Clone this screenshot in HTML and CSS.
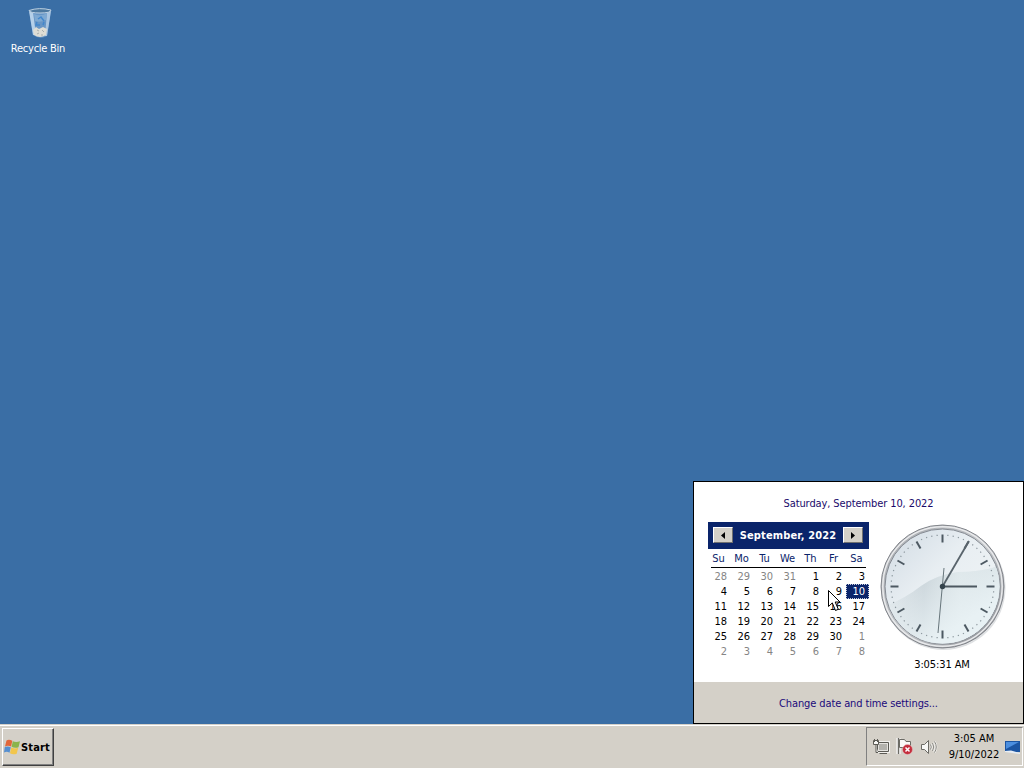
FILE: index.html
```html
<!DOCTYPE html>
<html lang="en">
<head>
  <meta charset="UTF-8">
  <title>Desktop</title>
  <link rel="stylesheet" href="styles.css">
</head>
<body>

<main class="desktop">
  <div class="desktop-icon">
    <svg class="bin" width="28" height="34" viewBox="0 0 28 34">
      <path d="M3 4 L25 4 L21 30 Q14 34 7 29Z" fill="#6795c5"/>
      <path d="M3 5 L7 6 L10 29 L7 29Z" fill="#b5d0e9"/>
      <path d="M21 6 L25 5 L21 30 L19 30Z" fill="#a9c5e1"/>
      <path d="M8 8 Q15 11 21 7 L20 14 Q14 17 9 15Z" fill="#7ea9d2"/>
      <path d="M12 13 l3 -2 l3 4 M11 16 l-1 3 l4 0 M18 16 l-1 3" stroke="#4287cc" stroke-width="1.500" fill="none"/>
      <path d="M7 24 L10 21 L13 23 L17 21 L21 23 L20 29 Q14 33 8 29Z" fill="#deddd5"/>
      <path d="M11 24 l2 1 M16 24 l2 2 M11 28 l2 -1 M15 29 l2 0" stroke="#a9aeac" fill="none"/>
      <path d="M3 4.500 Q13 1 25 4 Q25 7 14 7 Q4 7 3 4.500Z" fill="#4c789f" stroke="#bdd0e1"/>
    </svg>
    <span>Recycle Bin</span>
  </div>

  <section class="flyout">
    <div class="flyout-date">Saturday, September 10, 2022</div>
    <div class="flyout-body">
      <div class="calendar">
        <div class="cal-header">
          <button class="cal-nav"><svg width="4" height="7" viewBox="0 0 4 7"><path d="M4 0V7L0 3.5Z"/></svg></button>
          <span>September, 2022</span>
          <button class="cal-nav"><svg width="4" height="7" viewBox="0 0 4 7"><path d="M0 0V7L4 3.5Z"/></svg></button>
        </div>
        <div class="weekdays">
          <span>Su</span><span>Mo</span><span>Tu</span><span>We</span><span>Th</span><span>Fr</span><span>Sa</span>
        </div>
        <div class="days" id="days"></div>
      </div>
      <div class="clock">
        <svg width="128" height="128" viewBox="0 0 128 128">
          <defs>
            <linearGradient id="rim" x1="0" y1="0" x2="1" y2="1">
              <stop offset="0" stop-color="#a4a7ac"/>
              <stop offset=".5" stop-color="#c4c7ca"/>
              <stop offset="1" stop-color="#85888e"/>
            </linearGradient>
            <linearGradient id="face" x1="0" y1="0" x2="1" y2="1">
              <stop offset="0" stop-color="#d0dae3"/>
              <stop offset=".4" stop-color="#e8eef2"/>
              <stop offset=".7" stop-color="#edf2f4"/>
              <stop offset="1" stop-color="#e4edf0"/>
            </linearGradient>
            <linearGradient id="wave" x1="0" y1=".5" x2="1" y2=".5">
              <stop offset="0" stop-color="#c6d1d6" stop-opacity="0"/>
              <stop offset=".35" stop-color="#c9d3d9"/>
              <stop offset=".65" stop-color="#dce5e8"/>
              <stop offset="1" stop-color="#d0dade"/>
            </linearGradient>
            <linearGradient id="fade" x1="0" y1="0" x2="1" y2="1">
              <stop offset=".2" stop-color="#e5eef1" stop-opacity="0"/>
              <stop offset=".7" stop-color="#e8f1f4"/>
            </linearGradient>
            <clipPath id="dial"><circle cx="64.500" cy="64.500" r="57"/></clipPath>
          </defs>
          <circle cx="65.500" cy="66" r="62" fill="#dfe1e3"/>
          <circle cx="64.500" cy="64.500" r="61.500" fill="url(#rim)" stroke="#82858b"/>
          <circle cx="64.500" cy="64.500" r="59.700" fill="none" stroke="#e9eaec" stroke-width="1.500"/>
          <circle cx="64.500" cy="64.500" r="57.500" fill="url(#face)" stroke="#858a92"/>
          <g clip-path="url(#dial)">
            <path d="M4 86 Q28 76 43 64 Q58 53 80 50 Q104 50 124 43V124H4Z" fill="url(#wave)"/>
            <path d="M4 86 Q28 76 43 64 Q58 53 80 50 Q104 50 124 43V124H4Z" fill="url(#fade)"/>
          </g>
          <g id="ticks"></g>
          <path d="M64.500 64.500L91 19" stroke="#59646c" stroke-width="1.800"/>
          <path d="M64 64.500H99" stroke="#4d5860" stroke-width="2"/>
          <path d="M66 46L60 111" stroke="#67757b"/>
          <circle cx="64.500" cy="64.500" r="2.700" fill="#34434c"/>
        </svg>
        <div class="clock-time">3:05:31 AM</div>
      </div>
    </div>
    <div class="flyout-footer"><a>Change date and time settings...</a></div>
  </section>

  <svg class="cursor" width="14" height="22" viewBox="0 0 14 22">
    <path d="M.5 .5V16.500L4.300 12.900L7.500 20.500L10.300 19.300L7.200 12H12Z" fill="#fff" stroke="#000"/>
  </svg>
</main>

<footer class="taskbar">
  <button class="start">
    <svg width="16" height="16" viewBox="0 0 16 16">
      <path d="M2.500 1.500Q5 0 8.300 1.800L7.100 7.500Q4 6 1 7.400Z" fill="#e2673a"/>
      <path d="M8.800 2.200Q12 3.800 16 2.200L14.500 8.200Q11 9.400 7.600 7.800Z" fill="#8bb44c"/>
      <path d="M.8 8.100Q3.700 6.800 6.800 8.300L5.500 13.700Q3 12.200 0 13.400Z" fill="#568fd0"/>
      <path d="M7.300 8.600Q10.500 10.100 14.200 8.800L12.700 14.700Q9 16 6 14.200Z" fill="#f2c64c"/>
    </svg>
    <span>Start</span>
  </button>
  <div class="tray">
    <svg class="tray-icon" width="18" height="16" viewBox="0 0 18 16">
      <path d="M5.500 3.500H16.500V12.500H5.500Z" fill="#c8c6c0" stroke="#f1f0ed" stroke-width="3"/>
      <path d="M5.500 3.500H16.500V12.500H5.500ZM7.500 14.500H15" fill="#e4e3df" stroke="#5c5b55"/>
      <path d="M7 5H15V11H7Z" fill="#b3b2ad"/>
      <path d="M1.500 1.500H6.500V5.500H1.500ZM2.500 0V3M5.500 0V3M4 6V13.500H6" fill="#f7f7f5" stroke="#5c5b55"/>
    </svg>
    <svg class="tray-icon" width="18" height="17" viewBox="0 0 18 17">
      <path d="M2.500 0V16" stroke="#fff" stroke-width="4"/>
      <path d="M2.500 0V16" stroke="#6c6b65" stroke-width="1.500"/>
      <path d="M3.500 1.500H8.500L10 3.500H14.500V10.500H9L7.500 9.500H3.500Z" fill="#fafaf8" stroke="#6c6b65"/>
      <circle cx="11.500" cy="11.500" r="5" fill="#c42d3c" stroke="#e8c2c3" stroke-width=".5"/>
      <path d="M9.500 9.500L13.500 13.500M13.500 9.500L9.500 13.500" stroke="#fff" stroke-width="1.500"/>
    </svg>
    <svg class="tray-icon" width="18" height="16" viewBox="0 0 18 16">
      <path d="M1.500 5.500H4.500L8.500 1.500V14.500L4.500 10.500H1.500Z" fill="#f7f7f5" stroke="#6c6b65"/>
      <path d="M10.500 5.500Q12 8 10.500 10.500M12.500 4Q15 8 12.500 12M14.500 2.500Q18 8 14.500 13.500" fill="none" stroke="#f4f3f0" stroke-width="2.200"/>
      <path d="M10.500 5.500Q12 8 10.500 10.500M12.500 4Q15 8 12.500 12M14.500 2.500Q18 8 14.500 13.500" fill="none" stroke="#85847e"/>
    </svg>
    <div class="tray-clock"><span class="tray-time">3:05 AM</span><span class="tray-date">9/10/2022</span></div>
    <svg class="show-desktop" width="15" height="14" viewBox="0 0 15 14">
      <path d="M0 1H15V12H0Z" fill="#1c55a2"/>
      <path d="M1 2H14L1 9Z" fill="#4c8fdf"/>
      <path d="M0 11L6 10.500L15 13V14L7 13L0 12Z" fill="#e6edf5"/>
    </svg>
  </div>
</footer>

<script>
  // six weeks, starting on Sunday August 28
  const start = new Date(2022, 7, 28);
  let days = "";
  for (let i = 0; i < 42; i++) {
    const d = new Date(start.getFullYear(), start.getMonth(), start.getDate() + i);
    let cls = "day";
    if (d.getMonth() !== 8) cls += " other";
    else if (d.getDate() === 10) cls += " today";
    days += `<span class="${cls}">${d.getDate()}</span>`;
  }
  document.getElementById("days").innerHTML = days;

  let ticks = "";
  for (let i = 0; i < 60; i++) {
    const path = i % 5 === 0 ? "M64.5 12.5V20.5" : "M64.5 12.5V13.7";
    const cls = i % 5 === 0 ? "hour" : "minute";
    ticks += `<path class="${cls}" d="${path}" transform="rotate(${i * 6} 64.5 64.5)"/>`;
  }
  document.getElementById("ticks").innerHTML = ticks;
</script>

</body>
</html>
```
FILE: styles.css
```css
* {
  box-sizing: border-box;
}
body {
  margin: 0;
  width: 1024px;
  height: 768px;
  overflow: hidden;
  display: flex;
  flex-direction: column;
  background: #3a6ea5;
  font: 11px/13px "DejaVu Sans Condensed", "DejaVu Sans", sans-serif;
  color: #000;
}
button {
  font: inherit;
  padding: 0;
}
svg {
  display: block;
  flex: none;
}
.desktop {
  flex: 1;
  display: flex;
  justify-content: space-between;
  align-items: flex-end;
}
.desktop-icon {
  align-self: flex-start;
  width: 76px;
  padding-top: 6px;
  display: flex;
  flex-direction: column;
  align-items: center;
  gap: 2px;
  color: #fff;
  letter-spacing: -0.25px;
  white-space: nowrap;
}
.bin {
  margin-left: 3px;
}
.flyout {
  width: 331px;
  height: 243px;
  border: 1px solid #000;
  background: #fff;
  display: flex;
  flex-direction: column;
}
.flyout-date {
  height: 40px;
  padding-top: 15px;
  text-align: center;
  color: #1a0a6b;
  letter-spacing: -0.1px;
}
.flyout-body {
  flex: 1;
  display: flex;
  padding-left: 14px;
}
.calendar {
  width: 161px;
}
.cal-header {
  height: 27px;
  padding: 0 6px 1px 5px;
  display: flex;
  align-items: center;
  justify-content: space-between;
  background: #0a246a;
  color: #fff;
  font-weight: bold;
  letter-spacing: 0.15px;
  white-space: nowrap;
}
.cal-header span {
  padding-top: 1px;
}
.cal-nav {
  width: 20px;
  height: 16px;
  display: flex;
  align-items: center;
  justify-content: center;
  background: #d4d0c8;
  border: 1px solid;
  border-color: #fff #707070 #707070 #fff;
}
.weekdays {
  display: grid;
  grid-template-columns: repeat(7, 23px);
  height: 18px;
  margin: 0 4px 0 -1px;
  padding-top: 3px;
  text-align: center;
  color: #0a246a;
}
.days {
  display: grid;
  grid-template-columns: repeat(7, 23px);
  grid-auto-rows: 15px;
  padding-top: 1px;
  border-top: 1px solid #000;
  border-image: linear-gradient(to right, transparent 4px, #000 4px, #000 157px, transparent 157px) 1;
}
.day {
  padding: 1px 4px 0 0;
  text-align: right;
}
.other {
  color: #858585;
}
.today {
  background: #0a246a;
  color: #fff;
  outline: 1px dotted #c8ccdc;
  outline-offset: -1px;
}
.clock {
  margin-left: 9px;
  display: flex;
  flex-direction: column;
  align-items: center;
}
.clock-time {
  margin-top: 8px;
  letter-spacing: -0.1px;
}
.clock .hour {
  stroke: #4d5962;
  stroke-width: 2;
}
.clock .minute {
  stroke: #8b969d;
  stroke-width: 1.2;
}
.flyout-footer {
  height: 41px;
  padding-top: 2px;
  display: flex;
  align-items: center;
  justify-content: center;
  background: #d4d0c8;
  color: #1a0a7b;
  letter-spacing: -0.12px;
}
.cursor {
  position: absolute;
  left: 828px;
  top: 590px;
}
.taskbar {
  height: 44px;
  padding: 2px 1px 1px;
  display: flex;
  justify-content: space-between;
  background: #d4d0c8;
  border-top: 1px solid #d4d0c8;
  box-shadow: inset 0 1px #fff;
}
.start {
  width: 52px;
  height: 38px;
  margin: 1px 0 0 1px;
  padding: 0 1px;
  display: flex;
  align-items: center;
  gap: 1px;
  background: #d4d0c8;
  border: 1px solid;
  border-color: #fff #404040 #404040 #fff;
  box-shadow: inset -1px -1px #808080;
  font-weight: bold;
  letter-spacing: 0.15px;
}
.tray {
  width: 157px;
  height: 39px;
  display: flex;
  align-items: center;
  padding-left: 5px;
  border: 1px solid;
  border-color: #808080 #fff #fff #808080;
}
.tray-icon {
  margin-right: 6px;
}
.tray-clock {
  width: 60px;
  padding-top: 1px;
  display: flex;
  flex-direction: column;
  align-items: center;
  line-height: 16px;
  white-space: nowrap;
}
.show-desktop {
  margin-left: 1px;
}
```
